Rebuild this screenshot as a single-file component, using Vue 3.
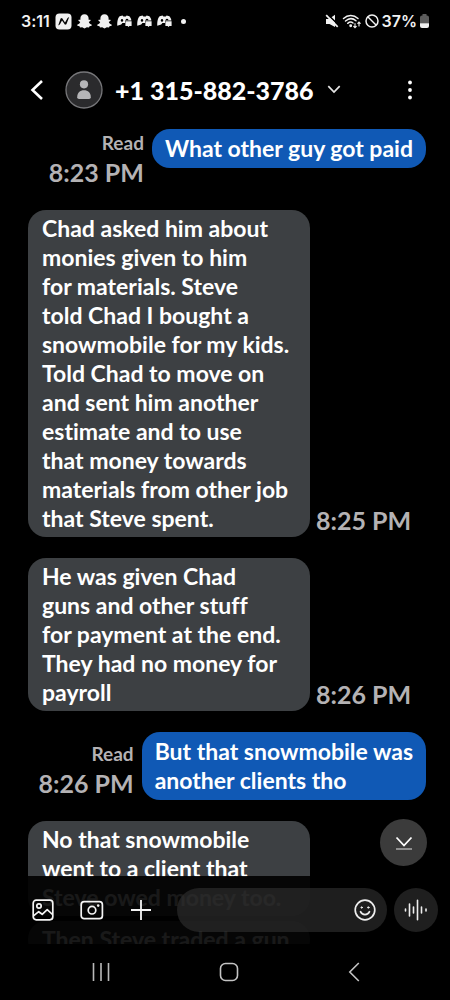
<script setup>
import { ref } from 'vue'

const draft = ref('')
const messages = [
  { out: true, status: 'Read', time: '8:23 PM', lines: ['What other guy got paid'] },
  {
    out: false,
    time: '8:25 PM',
    lines: [
      'Chad asked him about', 'monies given to him', 'for materials. Steve', 'told Chad I bought a',
      'snowmobile for my kids.', 'Told Chad to move on', 'and sent him another', 'estimate and to use',
      'that money towards', 'materials from other job', 'that Steve spent.',
    ],
  },
  {
    out: false,
    time: '8:26 PM',
    lines: ['He was given Chad', 'guns and other stuff', 'for payment at the end.', 'They had no money for', 'payroll'],
  },
  { out: true, status: 'Read', time: '8:26 PM', lines: ['But that snowmobile was', 'another clients tho'] },
  { out: false, lines: ['No that snowmobile', 'went to a client that', 'Steve owed money too.'] },
  { out: false, grouped: true, lines: ['Then Steve traded a gun'] },
]
</script>

<template>
  <div class="phone">
    <div class="status">
      <span class="clock">3:11</span>
      <svg class="notif" width="17" height="17" viewBox="0 0 17 17">
        <rect x="0.5" y="0.5" width="16" height="16" rx="4" fill="#f2f2f2" />
        <path d="M3.2 12.4 5.6 5.6 7 5 10 9.6 12.6 5 14.2 4 11.4 11.2 10 11.8 7 7.6 4.8 11.6Z" fill="#050505" />
      </svg>
      <svg v-for="n in 2" :key="'s' + n" class="notif" width="15" height="15" viewBox="0 0 15 15">
        <path d="M7.5 .3C4.9 .3 3.4 2.1 3.4 4.3V5.8L1.6 5.7 1.4 6.8 3.2 7.9C2.7 9.2 1.6 10.2.2 10.7L.4 11.8 2.5 12.3 3 13.4 5.2 13.2 7.5 14.6 9.8 13.2 12 13.4 12.5 12.3 14.6 11.8 14.8 10.7C13.4 10.2 12.3 9.2 11.8 7.9L13.6 6.8 13.4 5.7 11.6 5.8V4.3C11.6 2.1 10.1.3 7.5.3Z" fill="#f2f2f2" />
      </svg>
      <svg v-for="n in 3" :key="'g' + n" class="notif" width="15" height="12" viewBox="0 0 15 12">
        <path d="M.3 10.8C0 6.5 1 2.6 2.6 1.2L5.6.4 6.4 1.4H8.8L9.6.4 12.4 1.2C13.5 2.3 14.2 3.8 14.4 5.6H8V8H5.4L4.2 9.6Z" fill="#f2f2f2" />
        <ellipse cx="5" cy="5.4" rx="1.2" ry="1.4" fill="#000" />
        <path d="M8.8 3.9H11.2V5.2H8.8Z" fill="#000" />
        <path d="M8.4 6.2H14.6V11H12.4L11.5 12 10.6 11H8.4Z" fill="#f2f2f2" />
      </svg>
      <span class="dot"></span>
      <div class="system">
        <svg width="14" height="14" viewBox="0 0 14 14">
          <path d="M1 5H4L10 .8V13L4.5 10H1Z" fill="#f2f2f2" />
          <path d="M2.6.4 14 11.4" stroke="#000" stroke-width="1.6" />
          <path d="M1.2 1.2 12.7 12.8" stroke="#f2f2f2" stroke-width="1.7" />
        </svg>
        <svg width="20" height="15" viewBox="0 0 20 15" fill="none" stroke="#f2f2f2" stroke-width="1.5" stroke-linecap="round">
          <path d="M1.5 4.5C5.8.6 11.7.6 16 4.5M3.5 7C7 4 10.8 4 14 6.8M5.7 9.3C7.6 7.8 9.5 7.8 11 9" />
          <circle cx="8.7" cy="11.7" r=".7" fill="#f2f2f2" />
          <path d="M13 9.5V13.5M11.7 12.3 13 13.7 14.3 12.3M17 12V8.2M15.8 9.3 17 8 18.2 9.3" stroke-width="1.1" />
        </svg>
        <svg width="14" height="14" viewBox="0 0 14 14" fill="none" stroke="#f2f2f2" stroke-width="1.5">
          <circle cx="7" cy="7" r="6" />
          <path d="M3 3 11 11" />
        </svg>
        <span class="percent">37%</span>
        <svg width="9" height="14" viewBox="0 0 9 14">
          <path d="M2.5 0H6.5V1.5H7A2 2 0 0 1 9 3.5V9.5H0V3.5A2 2 0 0 1 2 1.5H2.5Z" fill="#5c5c5c" />
          <path d="M0 9.3H9V12A2 2 0 0 1 7 14H2A2 2 0 0 1 0 12Z" fill="#f2f2f2" />
        </svg>
      </div>
    </div>

    <header class="header">
      <button class="plain back" aria-label="Back">
        <svg width="14" height="22" viewBox="0 0 14 22"><path d="M12 2 2.5 11 12 20" fill="none" stroke="#fff" stroke-width="2.6" /></svg>
      </button>
      <svg class="avatar" width="38" height="38" viewBox="0 0 38 38">
        <circle cx="19" cy="19" r="18" fill="#2b2b2d" stroke="#77777a" stroke-width="1.3" />
        <circle cx="19" cy="13.3" r="4.1" fill="#b5b5b7" />
        <path d="M12.2 26.2C12.2 21.6 15 19.3 19 19.3S25.8 21.6 25.8 26.2Q25.8 28 24 28H14Q12.2 28 12.2 26.2Z" fill="#b5b5b7" />
      </svg>
      <button class="plain contact">
        <span>+1 315-882-3786</span>
        <svg width="14" height="9" viewBox="0 0 14 9"><path d="M1.3 1.2 7 7 12.7 1.2" fill="none" stroke="#e6e6e6" stroke-width="1.7" /></svg>
      </button>
      <button class="plain more" aria-label="More options">
        <svg width="6" height="20" viewBox="0 0 6 20" fill="#fff"><circle cx="3" cy="2.5" r="1.9" /><circle cx="3" cy="10" r="1.9" /><circle cx="3" cy="17.5" r="1.9" /></svg>
      </button>
    </header>

    <main class="chat">
      <div v-for="(m, i) in messages" :key="i" class="row" :class="{ out: m.out, grouped: m.grouped }">
        <p class="bubble"><template v-for="(line, j) in m.lines" :key="j"><br v-if="j">{{ line }}</template></p>
        <div v-if="m.time" class="meta">
          <span v-if="m.status" class="read">{{ m.status }}</span>
          <time class="time">{{ m.time }}</time>
        </div>
      </div>

      <button class="plain jump" aria-label="Scroll to latest">
        <svg width="18" height="16" viewBox="0 0 18 16" fill="none"><path d="M1.5 2.5 9 10.5 16.5 2.5" stroke="#fff" stroke-width="1.8" /><path d="M1 14H17" stroke="#a5a5a5" stroke-width="1.6" /></svg>
      </button>

      <form class="composer" @submit.prevent>
        <button type="button" class="plain tool" aria-label="Gallery">
          <svg width="22" height="22" viewBox="0 0 22 22" fill="none" stroke="#f4f4f4" stroke-width="1.7" stroke-linejoin="round">
            <rect x="1.2" y="1.2" width="19.6" height="19.6" rx="3" /><circle cx="7" cy="7" r="2.2" />
            <path d="M1.5 16.8 6.7 12.7 10.2 15.3 15.2 10.6 20.5 15.5" />
          </svg>
        </button>
        <button type="button" class="plain tool" aria-label="Camera">
          <svg width="24" height="20" viewBox="0 0 24 20" fill="none" stroke="#f4f4f4" stroke-width="1.7">
            <rect x="1.2" y="1.7" width="21.2" height="17" rx="3" /><circle cx="12" cy="10.2" r="3.8" /><circle cx="18.2" cy="5.6" r="1.3" fill="#f4f4f4" stroke="none" />
          </svg>
        </button>
        <button type="button" class="plain tool" aria-label="Add">
          <svg width="22" height="22" viewBox="0 0 22 22"><path d="M11 1V21M1 11H21" stroke="#f4f4f4" stroke-width="1.8" /></svg>
        </button>
        <div class="field">
          <input v-model="draft" type="text" aria-label="Message">
          <button type="button" class="plain" aria-label="Emoji">
            <svg width="22" height="22" viewBox="0 0 22 22" fill="none" stroke="#ededed" stroke-width="1.7" stroke-linecap="round">
              <circle cx="11" cy="11" r="9.8" /><path d="M6.5 12.7C8.2 16.6 13.8 16.6 15.5 12.7" />
              <circle cx="7.7" cy="8.5" r=".7" fill="#ededed" stroke-width="1" /><circle cx="14.3" cy="8.5" r=".7" fill="#ededed" stroke-width="1" />
            </svg>
          </button>
        </div>
        <button type="button" class="plain voice" aria-label="Voice message">
          <svg width="24" height="22" viewBox="0 0 24 22" stroke="#ededed" stroke-width="1.6" stroke-linecap="round"><path d="M1.5 10V12M5.5 5V17M9.5 8V14M13.5 1.2V20.8M17.5 8V14M22 10V12" /></svg>
        </button>
      </form>
    </main>

    <nav class="nav">
      <button class="plain" aria-label="Recents"><svg width="18" height="20" viewBox="0 0 18 20"><path d="M1.5 1V19M9 1V19M16.5 1V19" stroke="#b9b9b9" stroke-width="1.6" /></svg></button>
      <button class="plain" aria-label="Home"><svg width="20" height="20" viewBox="0 0 20 20"><rect x="1.5" y="1.5" width="17" height="17" rx="5" fill="none" stroke="#c4c4c4" stroke-width="1.6" /></svg></button>
      <button class="plain" aria-label="Back"><svg width="12" height="20" viewBox="0 0 12 20"><path d="M10.8 1 1.8 10 10.8 19" fill="none" stroke="#c4c4c4" stroke-width="1.6" /></svg></button>
    </nav>
  </div>
</template>

<style>
body {
  background: #000;
}
</style>

<style scoped>
.phone {
  display: flex;
  flex-direction: column;
  height: 100vh;
  background: #000;
  color: #fff;
  font-family: Lato, Roboto, sans-serif;
  font-variant-ligatures: none;
}
.plain {
  display: flex;
  align-items: center;
  justify-content: center;
  padding: 0;
  border: 0;
  background: none;
  color: inherit;
  font: inherit;
}
svg {
  display: block;
  flex: none;
}
.status {
  display: flex;
  align-items: center;
  height: 42px;
  padding: 0 21px;
  gap: 5px;
}
.clock,
.percent {
  font-family: Inter, sans-serif;
  font-size: 16px;
  line-height: 20px;
  font-weight: 600;
  color: #f2f2f2;
}
.dot {
  width: 5px;
  height: 5px;
  margin-left: 4px;
  border-radius: 50%;
  background: #f2f2f2;
}
.system {
  display: flex;
  align-items: center;
  gap: 3px;
  margin-left: auto;
}
.header {
  display: flex;
  align-items: center;
  height: 87px;
  padding: 8px 37px 0 30px;
  box-sizing: border-box;
}
.avatar {
  margin: 0 12px 0 21px;
}
.contact {
  gap: 13px;
  font-size: 25px;
  line-height: 32px;
  font-weight: 900;
}
.more {
  margin-left: auto;
}
.chat {
  position: relative;
  flex: 1;
  min-height: 0;
  overflow: hidden;
}
.row {
  display: flex;
  align-items: flex-end;
  gap: 6px;
  margin: 0 24px 21px 28px;
}
.row.out {
  flex-direction: row-reverse;
  gap: 8px;
}
.row.grouped {
  margin-top: -16px;
}
.bubble {
  flex: 0 0 282px;
  box-sizing: border-box;
  margin: 0;
  padding: 4px 14px;
  border-radius: 18px;
  background: #3d4043;
  font-size: 23px;
  line-height: 29px;
  font-weight: 700;
  white-space: nowrap;
}
.out .bubble {
  flex: none;
  align-self: flex-start;
  padding: 5px 13px;
  background: #1059b5;
}
.meta {
  display: flex;
  flex-direction: column;
  align-items: flex-end;
  padding-bottom: 2px;
  color: #b4b2b4;
}
.read {
  font-size: 19px;
  line-height: 28px;
  font-weight: 700;
}
.time {
  font-size: 25px;
  line-height: 30px;
  font-weight: 700;
}
.jump {
  position: absolute;
  right: 23px;
  bottom: 78px;
  width: 47px;
  height: 47px;
  border-radius: 50%;
  background: #3b3b3b;
}
.composer {
  position: absolute;
  left: 0;
  right: 0;
  bottom: 0;
  display: flex;
  align-items: center;
  height: 68px;
  padding: 0 12px 0 32px;
  box-sizing: border-box;
  background: rgba(0, 0, 0, 0.9);
}
.tool {
  width: 22px;
  margin-right: 27px;
}
.tool:nth-of-type(3) {
  margin-right: 25px;
}
.field {
  display: flex;
  align-items: center;
  flex: 1;
  min-width: 0;
  height: 44px;
  margin-right: 7px;
  padding: 0 11px 0 18px;
  border-radius: 22px;
  background: rgba(50, 50, 50, 0.6);
}
.field input {
  flex: 1;
  min-width: 0;
  border: 0;
  outline: 0;
  background: transparent;
  color: #fff;
  font: inherit;
}
.voice {
  width: 44px;
  height: 44px;
  border-radius: 50%;
  background: #1f1f1f;
}
.nav {
  display: flex;
  align-items: center;
  justify-content: space-between;
  height: 56px;
  padding: 0 90px 0 92px;
}
</style>
